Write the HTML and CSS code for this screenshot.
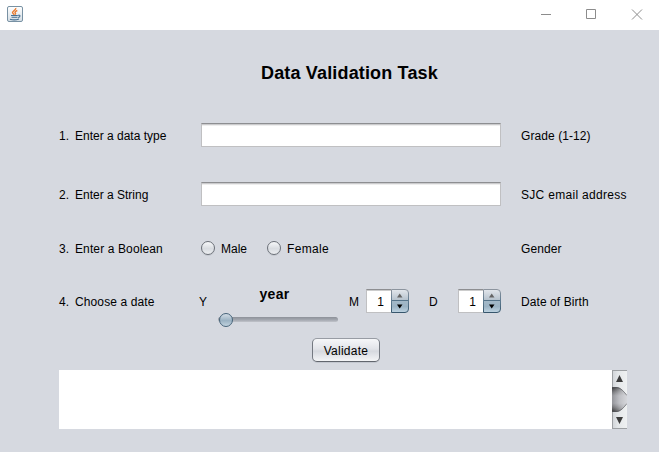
FILE: index.html
```html
<!DOCTYPE html>
<html lang="en">
<head>
<meta charset="utf-8">
<title>Data Validation Task</title>
<link rel="stylesheet" href="styles.css">
</head>
<body>
<header class="titlebar">
  <svg class="java" width="16" height="16" viewBox="0 0 16 16" fill="none">
    <defs><linearGradient id="tile" x2="0" y2="1"><stop stop-color="#fff"/><stop offset="1" stop-color="#d4dde4"/></linearGradient></defs>
    <rect x=".5" y=".5" width="15" height="15" rx="1.500" fill="url(#tile)" stroke="#7891a3"/>
    <path d="M8.800 2C9.300 4 5.500 4.800 5.500 6.600c0 .9 1.500 1.200 1.700 2.200M10.300 4.500C8.500 5.200 7.400 6 8.300 7c.5.600.2 1.200-.3 1.500" stroke="#e9792b" stroke-width="1.400"/>
    <path d="M4 9.500h6.800M4.500 11.200h6M3 13.200c2.500.8 6.500.7 9-.2M11 9.300c2.700-.6 2.500 1.900.2 2.300" stroke="#466f91" stroke-width="1.100"/>
  </svg>
  <svg class="controls" width="103" height="12" viewBox="0 0 103 12" fill="none" stroke="#8c8c8c">
    <path d="M0 6.500h10M45.500 1.500h9v9h-9zM91 1.500l10 10M101 1.500l-10 10"/>
  </svg>
</header>
<main class="form">
  <h1 class="heading">Data Validation Task</h1>
  <div class="row row-type">
    <label class="label"><span class="num">1.</span>Enter a data type</label>
    <input class="field" type="text">
    <span class="hint">Grade (1-12)</span>
  </div>
  <div class="row row-string">
    <label class="label"><span class="num">2.</span>Enter a String</label>
    <input class="field" type="text">
    <span class="hint hint-email">SJC email address</span>
  </div>
  <div class="row row-boolean">
    <span class="label label-wide"><span class="num">3.</span>Enter a Boolean</span>
    <div class="options">
      <label class="option male"><span class="radio"></span><span class="caption">Male</span></label>
      <label class="option"><span class="radio"></span><span class="caption">Female</span></label>
    </div>
    <span class="hint">Gender</span>
  </div>
  <div class="row row-date">
    <span class="label label-wide"><span class="num">4.</span>Choose a date</span>
    <div class="date">
      <span class="unit unit-y">Y</span>
      <div class="year">
        <span class="year-title">year</span>
        <div class="slider"><span class="knob"></span></div>
      </div>
      <span class="unit unit-m">M</span>
      <div class="spinner"><span class="value">1</span>
        <svg class="steps" width="18" height="24" viewBox="0 0 18 24">
          <defs>
            <linearGradient id="up" x2="0" y2="1"><stop stop-color="#e3e7ec"/><stop offset="1" stop-color="#b4c1cc"/></linearGradient>
            <linearGradient id="down" x2="0" y2="1"><stop stop-color="#a4b9c8"/><stop offset=".5" stop-color="#9bb3c4"/><stop offset="1" stop-color="#bfd4e2"/></linearGradient>
            <linearGradient id="edge" x2="0" y2="1"><stop stop-color="#8c949e"/><stop offset=".5" stop-color="#5e7b91"/><stop offset="1" stop-color="#37566c"/></linearGradient>
          </defs>
          <path d="M.5.5H14q3.500 0 3.500 3.500v7.500H.5z" fill="url(#up)"/>
          <path d="M.5 11.500h17V20q0 3.500-3.500 3.500H.5z" fill="url(#down)"/>
          <path d="M.5.5H14q3.500 0 3.500 3.500v16q0 3.500-3.500 3.500H.5z" fill="none" stroke="url(#edge)"/>
          <path d="M1 11.500h16" stroke="#557389"/>
          <path d="M6 8.500h5.500L8.700 4.500z" fill="#646464"/><path d="M6 15.500h5.500L8.700 19.500z" fill="#000"/>
        </svg>
      </div>
      <span class="unit unit-d">D</span>
      <div class="spinner"><span class="value">1</span>
        <svg class="steps" width="18" height="24" viewBox="0 0 18 24">
          <path d="M.5.5H14q3.500 0 3.500 3.500v7.500H.5z" fill="url(#up)"/>
          <path d="M.5 11.500h17V20q0 3.500-3.500 3.500H.5z" fill="url(#down)"/>
          <path d="M.5.5H14q3.500 0 3.500 3.500v16q0 3.500-3.500 3.500H.5z" fill="none" stroke="url(#edge)"/>
          <path d="M1 11.500h16" stroke="#557389"/>
          <path d="M6 8.500h5.500L8.700 4.500z" fill="#646464"/><path d="M6 15.500h5.500L8.700 19.500z" fill="#000"/>
        </svg>
      </div>
    </div>
    <span class="hint">Date of Birth</span>
  </div>
  <button class="validate" type="button">Validate</button>
  <div class="output">
    <div class="text"></div>
    <svg class="scroll" width="15" height="59" viewBox="0 0 15 59">
      <defs>
        <linearGradient id="track"><stop stop-color="#cfd2d6"/><stop offset=".4" stop-color="#e4e7e9"/><stop offset="1" stop-color="#eff1f2"/></linearGradient>
        <linearGradient id="thumb"><stop stop-color="#94959a"/><stop offset=".5" stop-color="#bfc0c5"/><stop offset="1" stop-color="#d5d6da"/></linearGradient>
        <linearGradient id="shade" x2="0" y2="1"><stop stop-color="#222" stop-opacity=".9"/><stop offset=".35" stop-color="#555" stop-opacity="0"/><stop offset=".65" stop-color="#555" stop-opacity="0"/><stop offset="1" stop-color="#222" stop-opacity=".9"/></linearGradient>
        <linearGradient id="fade"><stop stop-color="#fff"/><stop offset="1" stop-color="#000"/></linearGradient>
        <mask id="left"><rect width="15" height="59" fill="url(#fade)"/></mask>
      </defs>
      <path d="M0 0h15v59H0z" fill="url(#track)"/>
      <path d="M0 17h4C9 17 12 22 15 25.500v8C12 37 9 42 4 42H0z" fill="url(#thumb)"/>
      <path d="M0 17h4C9 17 12 22 15 25.500v8C12 37 9 42 4 42H0z" fill="url(#shade)" mask="url(#left)"/>
      <path d="M0 17.500h4C9 17.500 12 22 15 25.500M15 33.500C12 37 9 41.500 4 41.500H0" fill="none" stroke="#55575b" stroke-opacity=".7"/>
      <path d="M0 .5h15M0 58.500h15M.5 0v17M.5 42v17" stroke="#9da0a3" fill="none"/>
      <path d="M4 12h7L7.500 5zM4 47h7l-3.500 7z" fill="#3c3c3c"/>
    </svg>
  </div>
</main>
</body>
</html>
```
FILE: styles.css
```css
* { box-sizing: border-box; }
body { margin: 0; height: 452px; overflow: hidden; background: #d6d9e0; color: #000; font: 12px/14px "Liberation Sans", Arial, sans-serif; }
.titlebar { display: flex; justify-content: space-between; height: 30px; padding: 6px 15px 0 7px; background: #fff; }
.controls { margin-top: 2px; }
.form { display: flex; flex-direction: column; height: 422px; padding: 32px 32px 0 59px; }
.heading { margin: 0 0 39px 202px; font-size: 18px; line-height: 22px; letter-spacing: .16px; white-space: nowrap; }
.row { display: flex; align-items: center; flex: none; height: 24px; white-space: nowrap; }
.label { display: flex; flex: none; width: 142px; padding-top: 2px; }
.label-wide { letter-spacing: .12px; }
.num { width: 16px; letter-spacing: 0; }
.field { width: 300px; height: 24px; margin: 0; padding: 0 6px; border: 1px solid #c0c0c2; border-top-color: #8d8e91; border-radius: 0; background: #fff; box-shadow: inset 0 1px #cbcbcd, inset 0 2px #eee; outline: 0; font: inherit; }
.hint { margin-left: 20px; padding-top: 2px; letter-spacing: .08px; }
.hint-email { letter-spacing: .3px; }
.row-string { margin-top: 35px; }
.row-boolean { margin-top: 30px; }
.options { display: flex; width: 300px; }
.option { display: flex; align-items: center; gap: 6px; }
.caption { padding-top: 2px; letter-spacing: .35px; }
.male { width: 66px; }
.male .caption { letter-spacing: 0; }
.radio { width: 14px; height: 14px; border: 1px solid #6b7078; border-radius: 50%; background: linear-gradient(#f7f8fa, #d9dce1 55%, #eceef1); box-shadow: 0 1px #c4c8cf; }
.row-date { margin-top: 29px; }
.date { display: flex; align-items: center; width: 300px; }
.unit { flex: none; padding-top: 2px; }
.unit-y { width: 19px; margin-left: -2px; }
.year { display: flex; flex: none; flex-direction: column; align-items: center; height: 40px; width: 120px; margin: 10px 11px 0 0; }
.year-title { height: 28px; margin-right: 7px; font-size: 14px; font-weight: bold; line-height: 16px; letter-spacing: .3px; }
.slider { display: flex; flex: none; align-items: center; width: 120px; height: 5px; margin-top: 3px; border-radius: 3px; background: linear-gradient(#8d9199, #a5a9b1 60%, #c1c4ca); }
.knob { width: 14px; height: 14px; margin-left: 1px; border: 1px solid #47647a; border-radius: 50%; background: linear-gradient(#d2dce5, #9bb2c3 55%, #c1d3df); }
.unit-m { width: 16px; }
.spinner { display: flex; flex: none; width: 43px; height: 24px; margin-left: 1px; }
.value { width: 25px; padding: 5px 7px 0 0; border: 1px solid #c0c0c2; border-top: 1px solid #8d8e91; border-right: 0; background: #fff; box-shadow: inset 0 1px #ccc; line-height: 14px; text-align: right; }
.unit-d { width: 28px; margin-left: 20px; }
.validate { flex: none; width: 68px; height: 24px; margin: 25px 0 0 253px; padding: 1px 0 0; border: 1px solid #747981; border-top-color: #989ca4; border-bottom-color: #62666e; border-radius: 5px; background: linear-gradient(#f6f7f9, #e2e4e9 45%, #d6d9df 55%, #f4f5f7); box-shadow: 0 1px #c3c7cf; color: #000; font: inherit; letter-spacing: .25px; }
.output { display: flex; flex: none; height: 59px; margin-top: 8px; background: #fff; }
.text { flex: 1; }
.scroll { flex: none; }
```
